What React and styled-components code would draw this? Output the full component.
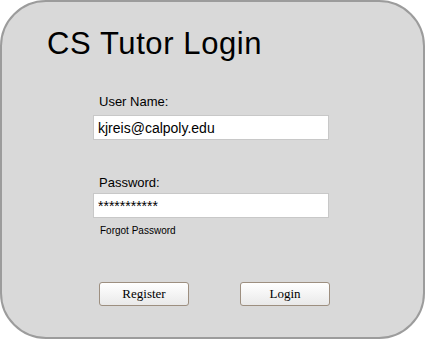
import React from "react";
import styled, { createGlobalStyle } from "styled-components";

const Global = createGlobalStyle`
  body {
    margin: 0;
    background: #ffffff;
    font-family: "Liberation Sans", Arial, sans-serif;
  }
`;

const Panel = styled.div`
  box-sizing: border-box;
  width: 425px;
  height: 339px;
  background: #d9d9d9;
  border: 2px solid #9c9c9c;
  border-radius: 46px;
  padding: 22px 0 0 45px;
`;

const Title = styled.h1`
  margin: 0;
  font-family: "Liberation Sans", Arial, sans-serif;
  font-weight: normal;
  font-size: 31px;
  letter-spacing: 0.6px;
  line-height: 40px;
  color: #000;
`;

const Form = styled.div`
  display: flex;
  flex-direction: column;
  margin: 30px 0 0 46px;
  width: 236px;
`;

const Label = styled.label`
  font-size: 13px;
  line-height: 16px;
  color: #000;
  margin: ${(p) => p.$top || 0}px 0 ${(p) => p.$bottom ?? 5}px 6px;
`;

const Input = styled.input`
  box-sizing: border-box;
  width: 236px;
  height: 25px;
  border: 1px solid #c8c8c8;
  background: #fff;
  padding: 0 4px;
  font-family: "Liberation Sans", Arial, sans-serif;
  font-size: 14px;
  color: #000;
  outline: none;
`;

const Forgot = styled.span`
  font-size: 10px;
  line-height: 12px;
  margin: 7px 0 0 7px;
  color: #000;
`;

const Buttons = styled.div`
  display: flex;
  justify-content: space-between;
  margin: 45px 0 0 6px;
  width: 231px;
`;

const Button = styled.button`
  box-sizing: border-box;
  width: 90px;
  height: 24px;
  border: 1px solid #9d8f80;
  border-radius: 3px;
  background: linear-gradient(#ffffff, #e9e9e9);
  font-family: "Liberation Serif", "Times New Roman", serif;
  font-size: 13px;
  color: #000;
  padding: 0;
`;

export default function App() {
  return (
    <>
      <Global />
      <Panel>
        <Title>CS Tutor Login</Title>
        <Form>
          <Label>User Name:</Label>
          <Input type="text" defaultValue="kjreis@calpoly.edu" />
          <Label $top={35} $bottom={2}>Password:</Label>
          <Input type="text" defaultValue="***********" />
          <Forgot>Forgot Password</Forgot>
          <Buttons>
            <Button>Register</Button>
            <Button>Login</Button>
          </Buttons>
        </Form>
      </Panel>
    </>
  );
}
